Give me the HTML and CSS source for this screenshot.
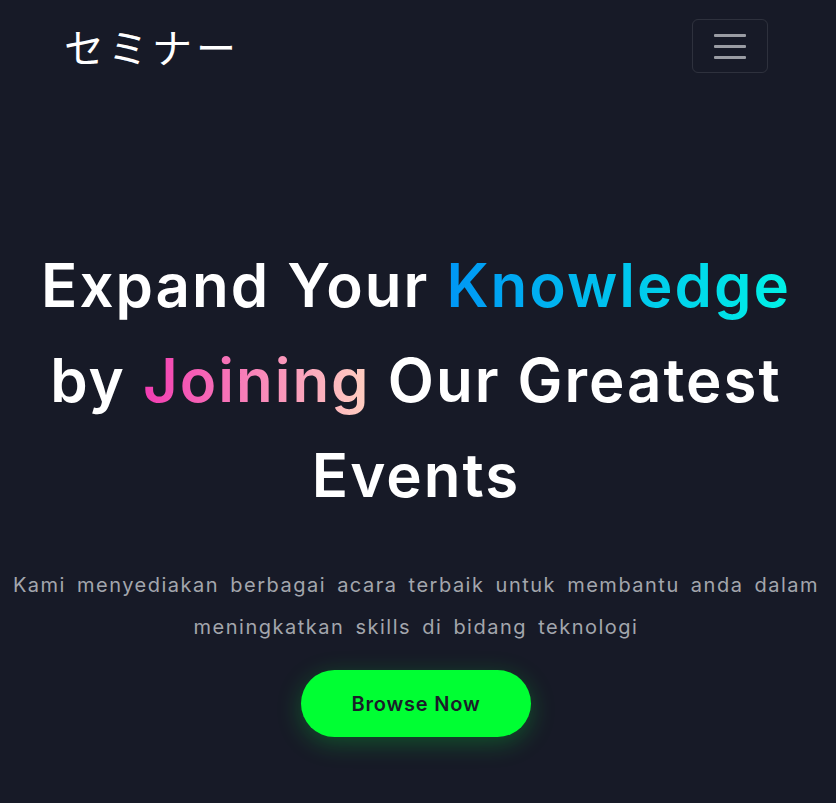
FILE: index.html
```html
<!DOCTYPE html>
<html lang="id">
<head>
<meta charset="utf-8">
<title>セミナー</title>
<link rel="stylesheet" href="styles.css">
</head>
<body>
<header class="navbar">
  <a class="brand" href="#">セミナー</a>
  <button class="toggler" aria-label="Toggle navigation">
    <span class="bar"></span><span class="bar"></span><span class="bar"></span>
  </button>
</header>
<main class="hero">
  <h1 class="title">Expand Your <span class="grad-blue">Knowledge</span><br>by <span class="grad-pink">Joining</span> Our Greatest<br>Events</h1>
  <p class="lead">Kami menyediakan berbagai acara terbaik untuk membantu anda dalam meningkatkan skills di bidang teknologi</p>
  <a class="cta" href="#">Browse Now</a>
</main>
</body>
</html>
```
FILE: styles.css
```css
html, body {
  margin: 0;
  padding: 0;
  background: #171a27;
  height: 100%;
}
body {
  font-family: "Inter", "Noto Sans", sans-serif;
  color: #fff;
}
.navbar {
  display: flex;
  justify-content: space-between;
  align-items: center;
  padding: 19px 68px 0 64px;
}
.brand {
  font-family: "Noto Sans CJK JP", sans-serif;
  font-size: 40px;
  font-weight: 400;
  color: #fff;
  text-decoration: none;
  letter-spacing: 4px;
  line-height: 54px;
}
.toggler {
  width: 76px;
  height: 54px;
  box-sizing: border-box;
  background: transparent;
  border: 1px solid rgba(255,255,255,0.1);
  border-radius: 6px;
  display: flex;
  flex-direction: column;
  align-items: center;
  justify-content: center;
  gap: 8px;
  padding: 0;
}
.bar {
  display: block;
  width: 32px;
  height: 3px;
  background: #9a9ca3;
  border-radius: 1px;
}
.hero {
  display: flex;
  flex-direction: column;
  align-items: center;
  text-align: center;
  padding: 0 12px 0 8px;
  margin-top: 165px;
}
.title {
  margin: 0;
  font-size: 60px;
  font-weight: 600;
  line-height: 95px;
  letter-spacing: 2px;
}
.grad-blue {
  background: linear-gradient(90deg, #0096f5, #00f2e6);
  -webkit-background-clip: text;
  background-clip: text;
  color: transparent;
}
.grad-pink {
  background: linear-gradient(90deg, #f23cb2, #ffd0c0);
  -webkit-background-clip: text;
  background-clip: text;
  color: transparent;
}
.lead {
  margin: 41px 0 0;
  font-size: 20px;
  line-height: 42px;
  color: #a3a6ad;
  font-weight: 400;
  letter-spacing: 1.5px;
  word-spacing: 4px;
}
.cta {
  margin-top: 22px;
  width: 230px;
  height: 67px;
  display: flex;
  align-items: center;
  justify-content: center;
  border-radius: 34px;
  background: #00ff33;
  color: #1a1d29;
  font-weight: 600;
  font-size: 20px;
  letter-spacing: 0.8px;
  text-decoration: none;
  box-shadow: 0 6px 24px rgba(0,255,60,0.25);
}
```
